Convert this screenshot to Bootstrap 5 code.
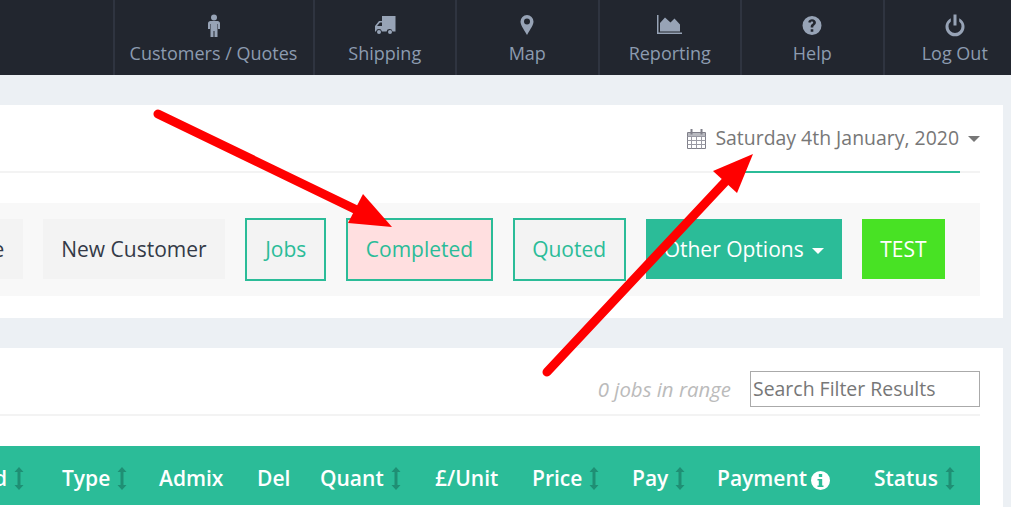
<!DOCTYPE html>
<html lang="en">
<head>
<meta charset="utf-8">
<title>Jobs</title>
<link rel="stylesheet" href="https://cdn.jsdelivr.net/npm/bootstrap@5.3.0/dist/css/bootstrap.min.css">
<style>
html,body{height:507px;overflow:hidden}
body{background:#ecf0f4;font-family:"Open Sans",sans-serif;position:relative;width:1011px}
.topbar{background:#22262f;height:75px;margin-right:-14px}
.topitem{width:142.5px;border-left:2px solid #2f3440;color:#8c9bb0;font-size:18px;line-height:24px;text-decoration:none;padding-top:13px}
.topitem.wide{width:200px}
.topitem svg{display:block;height:24px;margin-bottom:4px;fill:#97a3b6}
.pane{background:#fff;margin-right:8px;overflow:hidden}
.pane-a{margin-top:30px;height:213px;padding:0 23px 0 0}
.pane-b{margin-top:30px;height:159px;padding:0 23px 0 0}
.datebar{height:68px;border-bottom:2px solid #f3f3f3;padding-top:19px}
.datepick{border-bottom:2px solid #2bbc98;margin-bottom:-2px;height:49px;color:#777;font-size:19.45px;line-height:28px;padding-right:1px;margin-right:20px;position:relative;padding-left:0}
.datepick svg{margin-left:-28px;margin-right:9px;vertical-align:-4px}
.datecaret{border-top:6px solid #777;border-left:6px solid transparent;border-right:6px solid transparent;margin-left:9px;margin-top:12px;margin-right:-21px;height:0}
.tools{margin-top:30px;height:93px;background:#f8f8f8;padding:16px 35px 0 0;gap:20px}
.tbtn{font-size:21px;line-height:28px;height:60px;padding:16px 18.5px;border:0;border-radius:0;flex:none;background:#f3f3f3;color:#343a47}
.tbtn.ol{height:63px;border:2px solid #2bbc98;color:#2bbc98;padding:14px 17.5px 16px;margin-top:-1px}
.tbtn.ol.first{padding-left:18px;padding-right:18px}
.tbtn.hot{background:#ffdfe0}
.tbtn.gr{background:#2bbc98;color:#fff;padding:16px 18px}
.tbtn.lime{background:#48e224;color:#fff}
.tbtn .dropdown-caret{display:inline-block;border-top:6px solid #fff;border-left:6px solid transparent;border-right:6px solid transparent;margin-left:8px;vertical-align:3px}
.rangebar{height:68px;border-bottom:2px solid #f3f3f3;padding-bottom:7px;gap:19px}
.rangetxt{color:#bbb;font-style:italic;font-size:20.4px;line-height:36px}
.srch{width:230px;height:36px;border:1px solid #aaa;background:#fff;color:#777;font-size:19.45px;padding:0 2px 2px;border-radius:0;font-family:inherit}
.srch::placeholder{color:#777;opacity:1}
.tablewrap{margin-top:30px;overflow:hidden}
.jobhead{width:1080px;flex:none;table-layout:fixed;margin:0;border-collapse:collapse}
.jobhead th{background:#2bbc98;color:#fff;height:59px;padding:6px 0 0;font-size:21px;font-weight:600;white-space:nowrap;border:0}
.jobhead th:first-child{padding-right:38px}
.jobhead svg{vertical-align:-4px}
.sorter{fill:#1f8f74;margin-left:1.5px}
.infodot{margin-left:-2px}
.jobhead col:nth-child(1){width:162px}
.jobhead col:nth-child(2){width:97px}
.jobhead col:nth-child(3){width:98px}
.jobhead col:nth-child(4){width:63px}
.jobhead col:nth-child(5){width:115px}
.jobhead col:nth-child(6){width:97px}
.jobhead col:nth-child(7){width:100px}
.jobhead col:nth-child(8){width:85px}
.jobhead col:nth-child(9){width:157px}
.jobhead col:nth-child(10){width:106px}
.arrows{position:absolute;left:0;top:0;pointer-events:none}
</style>
</head>
<body>
<nav class="topbar d-flex justify-content-end">
  <a class="topitem wide text-center" href="#"><svg class="mx-auto" width="14" viewBox="0 0 14 24"><circle cx="7" cy="4.500" r="3"/><path d="M1 10.500c0-1.500 1-2.500 2.500-2.500h7c1.500 0 2.500 1 2.500 2.500V16h-2v-5h-.5v15H7.500v-8h-1v8H3.500V11H3v5H1z"/></svg>Customers / Quotes</a>
  <a class="topitem text-center" href="#"><svg class="mx-auto" width="22" viewBox="0 0 22 24"><path d="M8 3h13.500v15.500h-3a3 3 0 0 0-5.900 0H7.900a3 3 0 0 0-5.900 0H1v-5.500l4-5h3zM6 9.500l-3 3.500h5V9.500z" fill-rule="evenodd"/><circle cx="5" cy="19" r="2"/><circle cx="16" cy="19" r="2"/></svg>Shipping</a>
  <a class="topitem text-center" href="#"><svg class="mx-auto" width="14" viewBox="0 0 14 24"><path fill-rule="evenodd" d="M7 2a6.500 6.500 0 0 0-6.500 6.500C.5 12 3 15 7 22c4-7 6.500-10 6.500-13.500A6.500 6.500 0 0 0 7 2zm0 3.500a3 3 0 1 1 0 6 3 3 0 0 1 0-6z"/></svg>Map</a>
  <a class="topitem text-center" href="#"><svg class="mx-auto" width="25" viewBox="0 0 25 24"><path d="M0 2h1.500v17.500H25V21H0z"/><path d="M3 18V9.500L8 4l5.500 5 4-4L23 11v7z" transform="translate(0 0.500)"/></svg>Reporting</a>
  <a class="topitem text-center" href="#"><svg class="mx-auto" width="20" viewBox="0 0 20 24"><path fill-rule="evenodd" d="M10 3a9.500 9.500 0 1 0 0 19 9.500 9.500 0 0 0 0-19zM8.700 16.300h2.600v2.500H8.700zM6.200 9.200C6.700 7.200 8.300 6.300 10 6.300c2.300 0 3.900 1.400 3.900 3.300 0 1.500-.9 2.200-1.700 2.800-.7.500-.9.800-.9 1.500v.7H8.700v-.9c0-1.300.6-2 1.400-2.600.7-.5 1.100-.8 1.100-1.500 0-.7-.5-1.200-1.200-1.200-.8 0-1.300.5-1.500 1.300z"/></svg>Help</a>
  <a class="topitem text-center" href="#"><svg class="mx-auto" width="20" viewBox="0 0 20 24"><path d="M8.500 1.500h3v11h-3z"/><path d="M5.800 5.300v3.300a6.500 6.500 0 1 0 8.400 0V5.300a9.500 9.500 0 1 1-8.400 0z"/></svg>Log Out</a>
</nav>

<section class="pane pane-a">
  <div class="datebar d-flex justify-content-end">
    <div class="datepick d-flex">
      <span class="d-block text-nowrap"><svg width="19" height="20" viewBox="0 0 19 20"><path fill="#fff" stroke="#80808a" d="M.5 3.500h18v16H.5z"/><path fill="#b9bac0" d="M1 4h17v3.500H1z"/><path fill="none" stroke="#9a9aa4" d="M.5 7.500h18M.5 11.500h18M.5 15.500h18M4.500 7.500v12M9.500 7.500v12M14.500 7.500v12"/><path fill="#80808a" d="M3.500 0h2v5.500h-2zM13.500 0h2v5.500h-2z"/></svg>Saturday 4th January, 2020</span>
      <span class="datecaret"></span>
    </div>
  </div>
  <div class="tools d-flex justify-content-end align-items-start overflow-hidden">
    <button class="btn tbtn" type="button">New Quote</button>
    <button class="btn tbtn" type="button">New Customer</button>
    <button class="btn tbtn ol first" type="button">Jobs</button>
    <button class="btn tbtn ol hot" type="button">Completed</button>
    <button class="btn tbtn ol" type="button">Quoted</button>
    <button class="btn tbtn gr" type="button">Other Options<span class="dropdown-caret"></span></button>
    <button class="btn tbtn lime" type="button">TEST</button>
  </div>
</section>

<section class="pane pane-b">
  <div class="rangebar d-flex justify-content-end align-items-end">
    <span class="rangetxt">0 jobs in range</span>
    <input class="srch" type="text" placeholder="Search Filter Results">
  </div>
  <div class="tablewrap d-flex justify-content-end">
    <table class="jobhead">
      <colgroup><col><col><col><col><col><col><col><col><col><col></colgroup>
      <thead><tr>
        <th class="text-end">Required <svg class="sorter" width="10" height="23" viewBox="0 0 10 23"><path d="M5 0l4.500 5H6.500v13h3L5 23 .5 18h3V5H.5z"/></svg></th>
        <th>Type <svg class="sorter" width="10" height="23" viewBox="0 0 10 23"><path d="M5 0l4.500 5H6.500v13h3L5 23 .5 18h3V5H.5z"/></svg></th>
        <th>Admix</th>
        <th>Del</th>
        <th>Quant <svg class="sorter" width="10" height="23" viewBox="0 0 10 23"><path d="M5 0l4.500 5H6.500v13h3L5 23 .5 18h3V5H.5z"/></svg></th>
        <th>£/Unit</th>
        <th>Price <svg class="sorter" width="10" height="23" viewBox="0 0 10 23"><path d="M5 0l4.500 5H6.500v13h3L5 23 .5 18h3V5H.5z"/></svg></th>
        <th>Pay <svg class="sorter" width="10" height="23" viewBox="0 0 10 23"><path d="M5 0l4.500 5H6.500v13h3L5 23 .5 18h3V5H.5z"/></svg></th>
        <th>Payment <svg class="infodot" width="19" height="19" viewBox="0 0 19 19"><path fill="#fff" fill-rule="evenodd" d="M9.500 0a9.500 9.500 0 1 0 0 19 9.500 9.500 0 0 0 0-19zM7.800 3h3.400v3H7.800zM6.500 8h4.700v6.500h1.300V16h-6v-1.500h1.300V9.500H6.500z"/></svg></th>
        <th>Status <svg class="sorter" width="10" height="23" viewBox="0 0 10 23"><path d="M5 0l4.500 5H6.500v13h3L5 23 .5 18h3V5H.5z"/></svg></th>
      </tr></thead>
    </table>
  </div>
</section>

<svg class="arrows" width="1011" height="507" viewBox="0 0 1011 507">
  <g fill="#f00" stroke="#f00" stroke-linecap="round">
    <path d="M158 114L365 214" stroke-width="9" fill="none"/>
    <path d="M363 194L392 227 348 223z" stroke="none"/>
    <path d="M547 372L725 182" stroke-width="9" fill="none"/>
    <path d="M753 154L713 171 737 193z" stroke="none"/>
  </g>
</svg>
<script src="https://cdn.jsdelivr.net/npm/bootstrap@5.3.0/dist/js/bootstrap.bundle.min.js"></script>
</body>
</html>
